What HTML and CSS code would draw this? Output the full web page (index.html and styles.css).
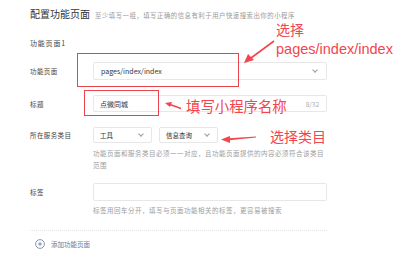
FILE: index.html
```html
<!DOCTYPE html>
<html lang="zh-CN">
<head>
    <meta charset="UTF-8">
    <title>配置功能页面</title>
    <link rel="stylesheet" href="styles.css">
</head>
<body>
    <div class="page">
        <div class="head">
            <h1>配置功能页面</h1>
            <span class="sub">至少填写一组，填写正确的信息有利于用户快速搜索出你的小程序</span>
        </div>

        <div class="group-title">功能页面1</div>

        <div class="form-row row-page">
            <label>功能页面</label>
            <div class="field">
                <div class="input select">
                    <span>pages/index/index</span>
                    <i class="chev"></i>
                </div>
            </div>
        </div>

        <div class="form-row row-title">
            <label>标题</label>
            <div class="field">
                <div class="input">
                    <span>点微同城</span>
                    <em class="count">8/32</em>
                </div>
            </div>
        </div>

        <div class="form-row row-cat">
            <label>所在服务类目</label>
            <div class="field">
                <div class="selects">
                    <div class="input select small"><span>工具</span><i class="chev"></i></div>
                    <div class="input select small"><span>信息查询</span><i class="chev"></i></div>
                </div>
                <p class="help">功能页面和服务类目必须一一对应，且功能页面提供的内容必须符合该类目范围</p>
            </div>
        </div>

        <div class="form-row row-tag">
            <label>标签</label>
            <div class="field">
                <div class="input"></div>
                <p class="help">标签用回车分开，填写与页面功能相关的标签，更容易被搜索</p>
            </div>
        </div>

        <div class="divider"></div>

        <div class="add">
            <svg width="10" height="10" viewBox="0 0 10 10">
                <circle cx="5" cy="5" r="4.4" fill="none" stroke="#6b7a99" stroke-width="0.8"/>
                <path d="M5 2.8v4.4M2.8 5h4.4" stroke="#6b7a99" stroke-width="0.8"/>
            </svg>
            <span>添加功能页面</span>
        </div>

        <!-- annotations -->
        <div class="mark mark-page"></div>
        <div class="mark mark-title"></div>
        <div class="note note-page">选择<br><span class="latin">pages/index/index</span></div>
        <div class="note note-title">填写小程序名称</div>
        <div class="note note-cat">选择类目</div>
        <svg class="arrows" width="400" height="267" viewBox="0 0 400 267">
            <path d="M274 41 L251 58" stroke="#f2454e" stroke-width="1.6"/>
            <path d="M244 63 L248 54 L254 60 Z" fill="#f2454e"/>
            <path d="M181 108.5 L170 104.5" stroke="#f2454e" stroke-width="1.4"/>
            <path d="M165 103 L172 102 L170 107 Z" fill="#f2454e"/>
            <path d="M256 136.5 L229 138.2 L229 140.2 L256 137.5 Z" fill="#f2454e"/>
            <path d="M221 139.5 L230 136 L230 143 Z" fill="#f2454e"/>
        </svg>
    </div>
</body>
</html>
```

FILE: styles.css
```css
body {
    margin: 0;
    background: #fff;
    font-family: "Noto Sans CJK SC", "Liberation Sans", sans-serif;
    color: #353535;
}

.page {
    position: relative;
    width: 400px;
    height: 267px;
    overflow: hidden;
    padding: 7px 0 0 30px;
    box-sizing: border-box;
}

.head {
    display: flex;
    align-items: baseline;
    gap: 5px;
    height: 13px;
}

.head h1 {
    margin: 0;
    font-size: 10px;
    font-weight: normal;
    color: #333;
    line-height: 13px;
}

.head .sub {
    font-size: 6.4px;
    color: #9a9a9a;
    letter-spacing: 0.5px;
}

.group-title {
    margin-top: 17px;
    font-size: 7px;
    line-height: 12px;
    letter-spacing: 0.8px;
    color: #444;
}

.form-row {
    display: flex;
    align-items: flex-start;
}

.form-row label {
    width: 63px;
    flex: none;
    font-size: 6.5px;
    color: #444;
    letter-spacing: 0.4px;
}

.field {
    width: 234px;
}

.input {
    display: flex;
    align-items: center;
    justify-content: space-between;
    height: 18px;
    box-sizing: border-box;
    border: 1px solid #e7e7e7;
    border-radius: 2px;
    padding: 0 7px;
    font-size: 7px;
    color: #333;
}

.row-page {
    margin-top: 13px;
    align-items: center;
}

.row-title {
    margin-top: 15px;
    align-items: center;
}

.row-title .input {
    height: 17px;
    padding-left: 6px;
}

.count {
    font-style: normal;
    font-size: 6.5px;
    color: #aaa;
}

.row-cat {
    margin-top: 15px;
}

.row-cat label {
    line-height: 16px;
}

.selects {
    display: flex;
    gap: 7px;
}

.input.small {
    width: 59px;
    height: 16px;
    padding: 0 6px;
    font-size: 6.5px;
}

.chev {
    width: 3px;
    height: 3px;
    border-right: 0.8px solid #999;
    border-bottom: 0.8px solid #999;
    transform: rotate(45deg);
    margin: -2px 2px 0 0;
}

.help {
    margin: 4px 0 0;
    font-size: 6.5px;
    line-height: 12px;
    color: #9d9d9d;
    letter-spacing: 0.5px;
}

.row-tag {
    margin-top: 12px;
}

.row-tag label {
    line-height: 18px;
}

.row-tag .help {
    margin-top: 3px;
}

.divider {
    width: 297px;
    margin-top: 14px;
    border-top: 1px dotted #e2e2e2;
}

.add {
    display: flex;
    align-items: center;
    gap: 6px;
    margin: 8px 0 0 5px;
    font-size: 6.5px;
    color: #6b7a99;
}

.add svg {
    display: block;
}

/* annotations over the form */
.mark {
    position: absolute;
    border: 1.5px solid #e9434b;
}

.mark-page {
    left: 77px;
    top: 53px;
    width: 160px;
    height: 32px;
}

.mark-title {
    left: 84px;
    top: 90px;
    width: 73px;
    height: 24px;
}

.note {
    position: absolute;
    color: #f2454e;
    font-size: 14px;
    white-space: nowrap;
    font-family: "Liberation Sans", "Noto Sans CJK SC", sans-serif;
}

.note-page {
    left: 276px;
    top: 21px;
    line-height: 19px;
}

.note-page .latin {
    font-size: 14.5px;
}

.note-title {
    left: 186px;
    top: 97px;
    font-size: 14.4px;
    line-height: 20px;
}

.note-cat {
    left: 270px;
    top: 129px;
    line-height: 16px;
}

.arrows {
    position: absolute;
    left: 0;
    top: 0;
}
```
